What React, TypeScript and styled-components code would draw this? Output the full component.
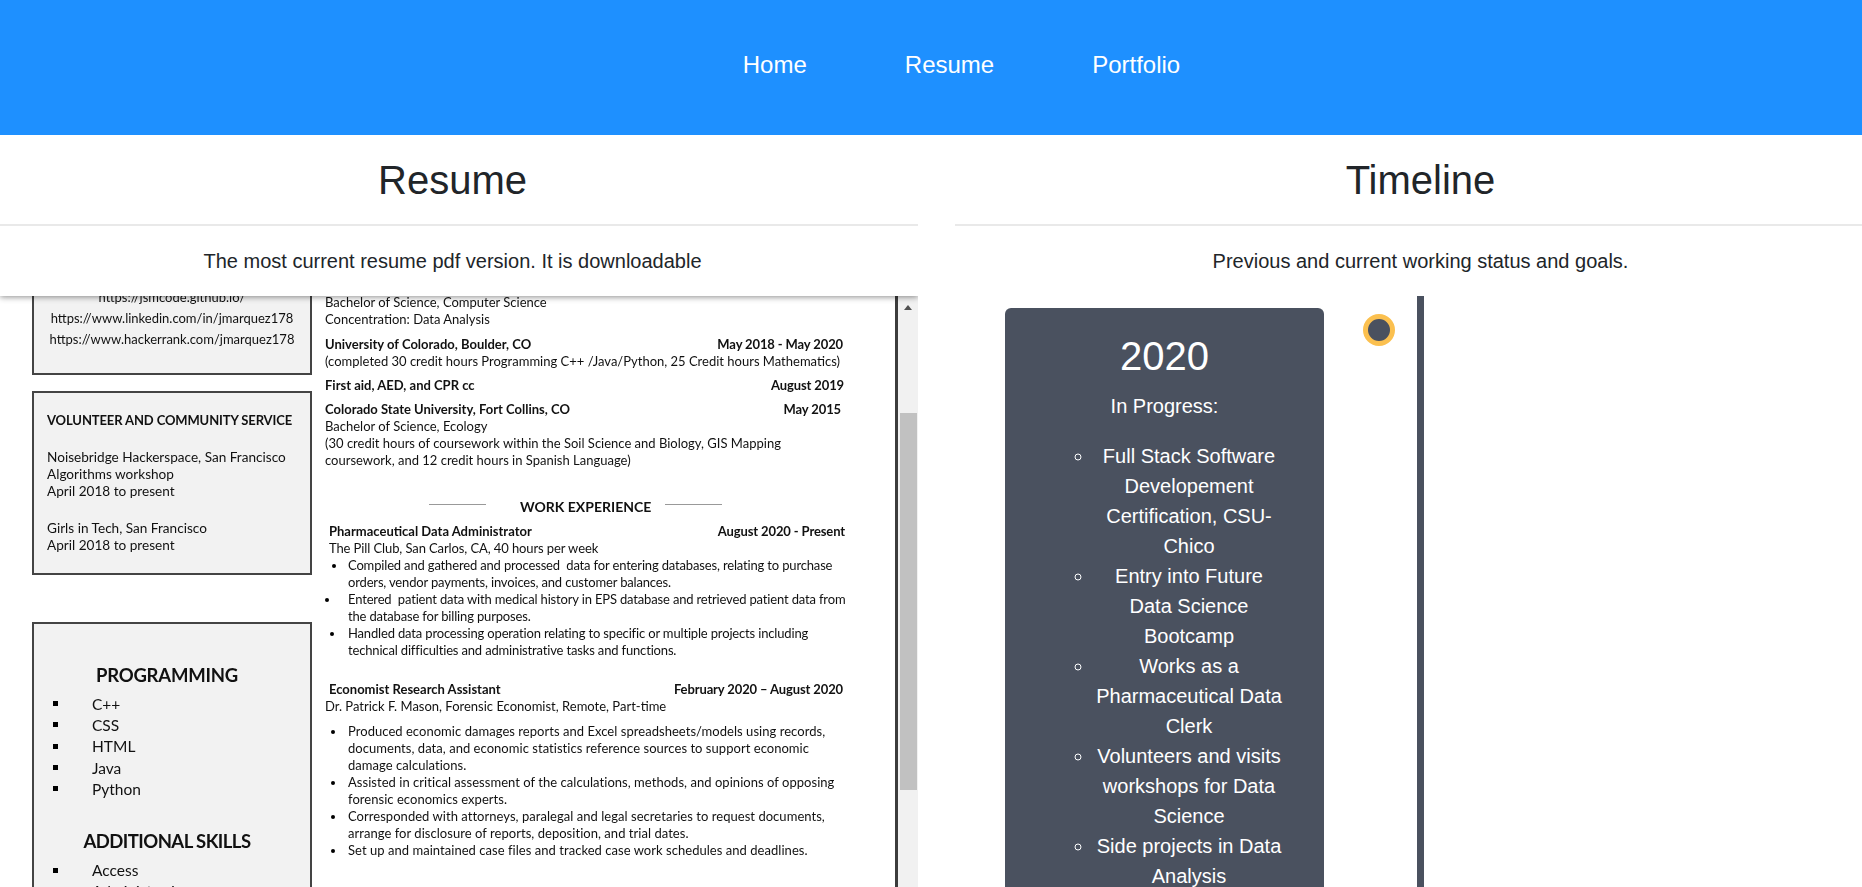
import styled, { createGlobalStyle } from 'styled-components'

const Global = createGlobalStyle`
  html, body {
    margin: 0;
    padding: 0;
    height: 100%;
    overflow: hidden;
    background: #fff;
    font-family: "Liberation Sans", Arial, sans-serif;
    color: #212529;
  }
  * { box-sizing: border-box; }
`

const App = () => {
  return (
    <Page>
      <Global />
      <TopBar>
        <NavLink href="#">Home</NavLink>
        <NavLink href="#">Resume</NavLink>
        <NavLink href="#">Portfolio</NavLink>
      </TopBar>

      <Columns>
        <Column>
          <SectionHead $shadow $pad="0 13px 0 0">
            <Title>Resume</Title>
            <Rule />
            <Subtitle>The most current resume pdf version. It is downloadable</Subtitle>
          </SectionHead>

          <Viewer>
            <Sheet>
              <SideCol>
                <SideBox $h={99} $mt={-20} $pad="11px 0 0 0">
                  <Link>https://jsmcode.github.io/</Link>
                  <Link $mt={4}>https://www.linkedin.com/in/jmarquez178</Link>
                  <Link $mt={4}>https://www.hackerrank.com/jmarquez178</Link>
                </SideBox>
                <SideBox $h={184} $mt={16} $pad="19px 0 0 13px">
                  <BoxHead>VOLUNTEER AND COMMUNITY SERVICE</BoxHead>
                  <SideText $mt={20}>Noisebridge Hackerspace, San Francisco</SideText>
                  <SideText>Algorithms workshop</SideText>
                  <SideText>April 2018 to present</SideText>
                  <SideText $mt={20}>Girls in Tech, San Francisco</SideText>
                  <SideText>April 2018 to present</SideText>
                </SideBox>
                <SideBox $h={400} $mt={47} $pad="39px 0 0 0">
                  <SkillHead>PROGRAMMING</SkillHead>
                  <SkillList>
                    <Skill>C++</Skill>
                    <Skill>CSS</Skill>
                    <Skill>HTML</Skill>
                    <Skill>Java</Skill>
                    <Skill>Python</Skill>
                  </SkillList>
                  <SkillHead $mt={30} $tight>ADDITIONAL SKILLS</SkillHead>
                  <SkillList>
                    <Skill>Access</Skill>
                    <Skill>Administration</Skill>
                  </SkillList>
                </SideBox>
              </SideCol>

              <MainCol>
                <Line $mt={-2}>Bachelor of Science, Computer Science</Line>
                <Line>Concentration: Data Analysis</Line>
                <Entry $mt={8} $right={2}>
                  <span>University of Colorado, Boulder, CO</span>
                  <When>May 2018 - May 2020</When>
                </Entry>
                <Line>(completed 30 credit hours Programming C++ /Java/Python, 25 Credit hours Mathematics)</Line>
                <Entry $mt={7} $right={1}>
                  <span>First aid, AED, and CPR cc</span>
                  <When>August 2019</When>
                </Entry>
                <Entry $mt={7} $right={4}>
                  <span>Colorado State University, Fort Collins, CO</span>
                  <When>May 2015</When>
                </Entry>
                <Line>Bachelor of Science, Ecology</Line>
                <Line>(30 credit hours of coursework within the Soil Science and Biology, GIS Mapping</Line>
                <Line>coursework, and 12 credit hours in Spanish Language)</Line>

                <WorkHead>
                  <WorkRule />
                  <WorkLabel>WORK EXPERIENCE</WorkLabel>
                  <WorkRule />
                </WorkHead>

                <Entry $mt={8} $inset={4}>
                  <span>Pharmaceutical Data Administrator</span>
                  <When>August 2020 - Present</When>
                </Entry>
                <Line $inset={4} $ls={-0.1}>The Pill Club, San Carlos, CA, 40 hours per week</Line>
                <Bullets $ls={-0.16}>
                  <Bullet><Dot $x={7} /><span>Compiled and gathered and processed  data for entering databases, relating to purchase<br />orders, vendor payments, invoices, and customer balances.</span></Bullet>
                  <Bullet><Dot $x={0} /><span>Entered  patient data with medical history in EPS database and retrieved patient data from<br />the database for billing purposes.</span></Bullet>
                  <Bullet><Dot $x={5} /><span>Handled data processing operation relating to specific or multiple projects including<br />technical difficulties and administrative tasks and functions.</span></Bullet>
                </Bullets>

                <Entry $mt={22} $inset={4} $right={2}>
                  <span>Economist Research Assistant</span>
                  <When>February 2020 – August 2020</When>
                </Entry>
                <Line>Dr. Patrick F. Mason, Forensic Economist, Remote, Part-time</Line>
                <Bullets $mt={8} $ls={0.04}>
                  <Bullet><Dot $x={6} /><span>Produced economic damages reports and Excel spreadsheets/models using records,<br />documents, data, and economic statistics reference sources to support economic<br />damage calculations.</span></Bullet>
                  <Bullet><Dot $x={6} /><span>Assisted in critical assessment of the calculations, methods, and opinions of opposing<br />forensic economics experts.</span></Bullet>
                  <Bullet><Dot $x={6} /><span>Corresponded with attorneys, paralegal and legal secretaries to request documents,<br />arrange for disclosure of reports, deposition, and trial dates.</span></Bullet>
                  <Bullet><Dot $x={6} /><span>Set up and maintained case files and tracked case work schedules and deadlines.</span></Bullet>
                </Bullets>
              </MainCol>
            </Sheet>

            <Track>
              <ArrowUp />
              <Thumb />
            </Track>
          </Viewer>
        </Column>

        <Column>
          <SectionHead $pad="0 0 0 24px">
            <Title>Timeline</Title>
            <Rule />
            <Subtitle>Previous and current working status and goals.</Subtitle>
          </SectionHead>

          <TimelineRow>
            <YearCard>
              <Year>2020</Year>
              <Status>In Progress:</Status>
              <GoalList>
                <li>Full Stack Software Developement Certification, CSU-Chico</li>
                <li>Entry into Future Data Science Bootcamp</li>
                <li>Works as a Pharmaceutical Data Clerk</li>
                <li>Volunteers and visits workshops for Data Science</li>
                <li>Side projects in Data Analysis</li>
              </GoalList>
            </YearCard>
            <Marker />
            <Spine />
          </TimelineRow>
        </Column>
      </Columns>
    </Page>
  )
}

export default App

const Page = styled.div`
    height: 100vh;
    display: flex;
    flex-direction: column;
    overflow: hidden;
`

const TopBar = styled.nav`
    flex: 0 0 135px;
    background-color: #1e90ff;
    display: flex;
    align-items: center;
    justify-content: center;
    gap: 98px;
    padding: 0 0 5px 61px;
`

const NavLink = styled.a`
    color: #fff;
    font-size: 24px;
    text-decoration: none;
`

const Columns = styled.div`
    flex: 1;
    min-height: 0;
    display: grid;
    grid-template-columns: 918px 907px;
    column-gap: 37px;
`

const Column = styled.section`
    display: flex;
    flex-direction: column;
    min-height: 0;
    overflow: hidden;
`

const SectionHead = styled.header<{ $shadow?: boolean; $pad: string }>`
    position: relative;
    z-index: 2;
    flex: 0 0 161px;
    background: #fff;
    text-align: center;
    box-shadow: ${p => (p.$shadow ? '0 1px 6px rgba(0, 0, 0, 0.45)' : 'none')};
    h2, p { padding: ${p => p.$pad}; }
`

const Title = styled.h2`
    margin: 0;
    height: 89px;
    line-height: 90px;
    font-size: 40px;
    font-weight: 400;
`

const Rule = styled.div`
    height: 2px;
    background: #e9e9e9;
`

const Subtitle = styled.p`
    margin: 0;
    line-height: 70px;
    font-size: 20px;
`

const Viewer = styled.div`
    flex: 1;
    min-height: 0;
    display: flex;
    overflow: hidden;
`

const Sheet = styled.div`
    width: 898px;
    border-right: 3px solid #3c3c3c;
    display: grid;
    grid-template-columns: 325px 1fr;
    overflow: hidden;
    font-family: Lato, "Open Sans", sans-serif;
    color: #111;
    filter: blur(0.3px);
`

const SideCol = styled.div`
    padding-left: 32px;
`

const SideBox = styled.div<{ $h: number; $mt: number; $pad?: string }>`
    width: 280px;
    height: ${p => p.$h}px;
    margin-top: ${p => p.$mt}px;
    padding: ${p => p.$pad || '0'};
    background: #f2f2f2;
    border: 2px solid #444;
`

const Link = styled.div<{ $mt?: number }>`
    margin-top: ${p => p.$mt || 0}px;
    font-size: 13px;
    line-height: 17px;
    text-align: center;
    white-space: nowrap;
`

const BoxHead = styled.div`
    font-size: 13px;
    font-weight: 700;
    line-height: 17px;
    letter-spacing: -0.12px;
    white-space: nowrap;
`

const SideText = styled.div<{ $mt?: number }>`
    margin-top: ${p => p.$mt || 0}px;
    font-size: 13.6px;
    line-height: 17px;
    white-space: nowrap;
`

const SkillHead = styled.div<{ $mt?: number; $tight?: boolean }>`
    margin-top: ${p => p.$mt || 0}px;
    padding-right: 10px;
    text-align: center;
    font-size: 18.5px;
    font-weight: 700;
    line-height: 24px;
    letter-spacing: ${p => (p.$tight ? '-0.55px' : '-0.2px')};
`

const SkillList = styled.ul`
    list-style: none;
    margin: 6px 0 0;
    padding: 0 0 0 19px;
`

const Skill = styled.li`
    display: flex;
    align-items: center;
    height: 21.3px;
    font-size: 15.5px;
    &::before {
        content: '';
        width: 5px;
        height: 5px;
        margin-right: 34px;
        background: #000;
    }
`

const MainCol = styled.div`
    font-size: 13px;
    line-height: 17px;
    white-space: pre;
`

const Line = styled.div<{ $mt?: number; $inset?: number; $ls?: number }>`
    margin-top: ${p => p.$mt || 0}px;
    padding-left: ${p => p.$inset || 0}px;
    letter-spacing: ${p => p.$ls || 0}px;
`

const Entry = styled.div<{ $mt?: number; $inset?: number; $right?: number }>`
    width: 520px;
    display: flex;
    justify-content: space-between;
    margin-top: ${p => p.$mt || 0}px;
    padding: 0 ${p => p.$right || 0}px 0 ${p => p.$inset || 0}px;
    font-weight: 700;
`

const When = styled.span`
    letter-spacing: -0.12px;
`

const WorkHead = styled.div`
    margin: 29px 0 0 0;
    padding-left: 104px;
    display: flex;
    align-items: center;
    gap: 14px;
    font-size: 14px;
    font-weight: 700;
`

const WorkLabel = styled.span`
    margin-left: 20px;
`

const WorkRule = styled.i`
    width: 57px;
    height: 1.5px;
    margin-bottom: 4px;
    background: #999;
`

const Bullets = styled.ul<{ $mt?: number; $ls?: number }>`
    list-style: none;
    margin: ${p => p.$mt || 0}px 0 0;
    padding: 0;
    letter-spacing: ${p => p.$ls || 0}px;
`

const Bullet = styled.li`
    display: grid;
    grid-template-columns: 23px 1fr;
`

const Dot = styled.i<{ $x: number }>`
    width: 4px;
    height: 4px;
    margin: 7px 0 0 ${p => p.$x}px;
    border-radius: 50%;
    background: #000;
`

const Track = styled.div`
    width: 20px;
    background: #f1f1f1;
    display: flex;
    flex-direction: column;
    align-items: center;
`

const ArrowUp = styled.i`
    margin-top: 9px;
    border-left: 4.5px solid transparent;
    border-right: 4.5px solid transparent;
    border-bottom: 5px solid #505050;
`

const Thumb = styled.div`
    width: 17px;
    height: 377px;
    margin-top: 103px;
    background: #c1c1c1;
`

const TimelineRow = styled.div`
    flex: 1;
    min-height: 0;
    display: flex;
    align-items: flex-start;
    padding-left: 50px;
    overflow: hidden;
`

const YearCard = styled.article`
    flex: 0 0 319px;
    margin-top: 12px;
    padding: 24px 0 20px;
    background: #4a515f;
    border-radius: 6px;
    color: #fff;
`

const Year = styled.h3`
    margin: 0;
    text-align: center;
    font-size: 40px;
    font-weight: 400;
    line-height: 48px;
`

const Status = styled.p`
    margin: 11px 0 0;
    text-align: center;
    font-size: 20px;
    line-height: 30px;
`

const GoalList = styled.ul`
    margin: 20px 40px 0 49px;
    padding: 0 0 0 40px;
    list-style: circle;
    font-size: 20px;
    line-height: 30px;
    text-align: center;
`

const Marker = styled.div`
    flex: 0 0 32px;
    height: 32px;
    margin: 18px 0 0 39px;
    background: #4a515f;
    border: 5px solid #fbc04f;
    border-radius: 50%;
`

const Spine = styled.div`
    flex: 0 0 7px;
    align-self: stretch;
    margin-left: 22px;
    background: #4a515f;
`
